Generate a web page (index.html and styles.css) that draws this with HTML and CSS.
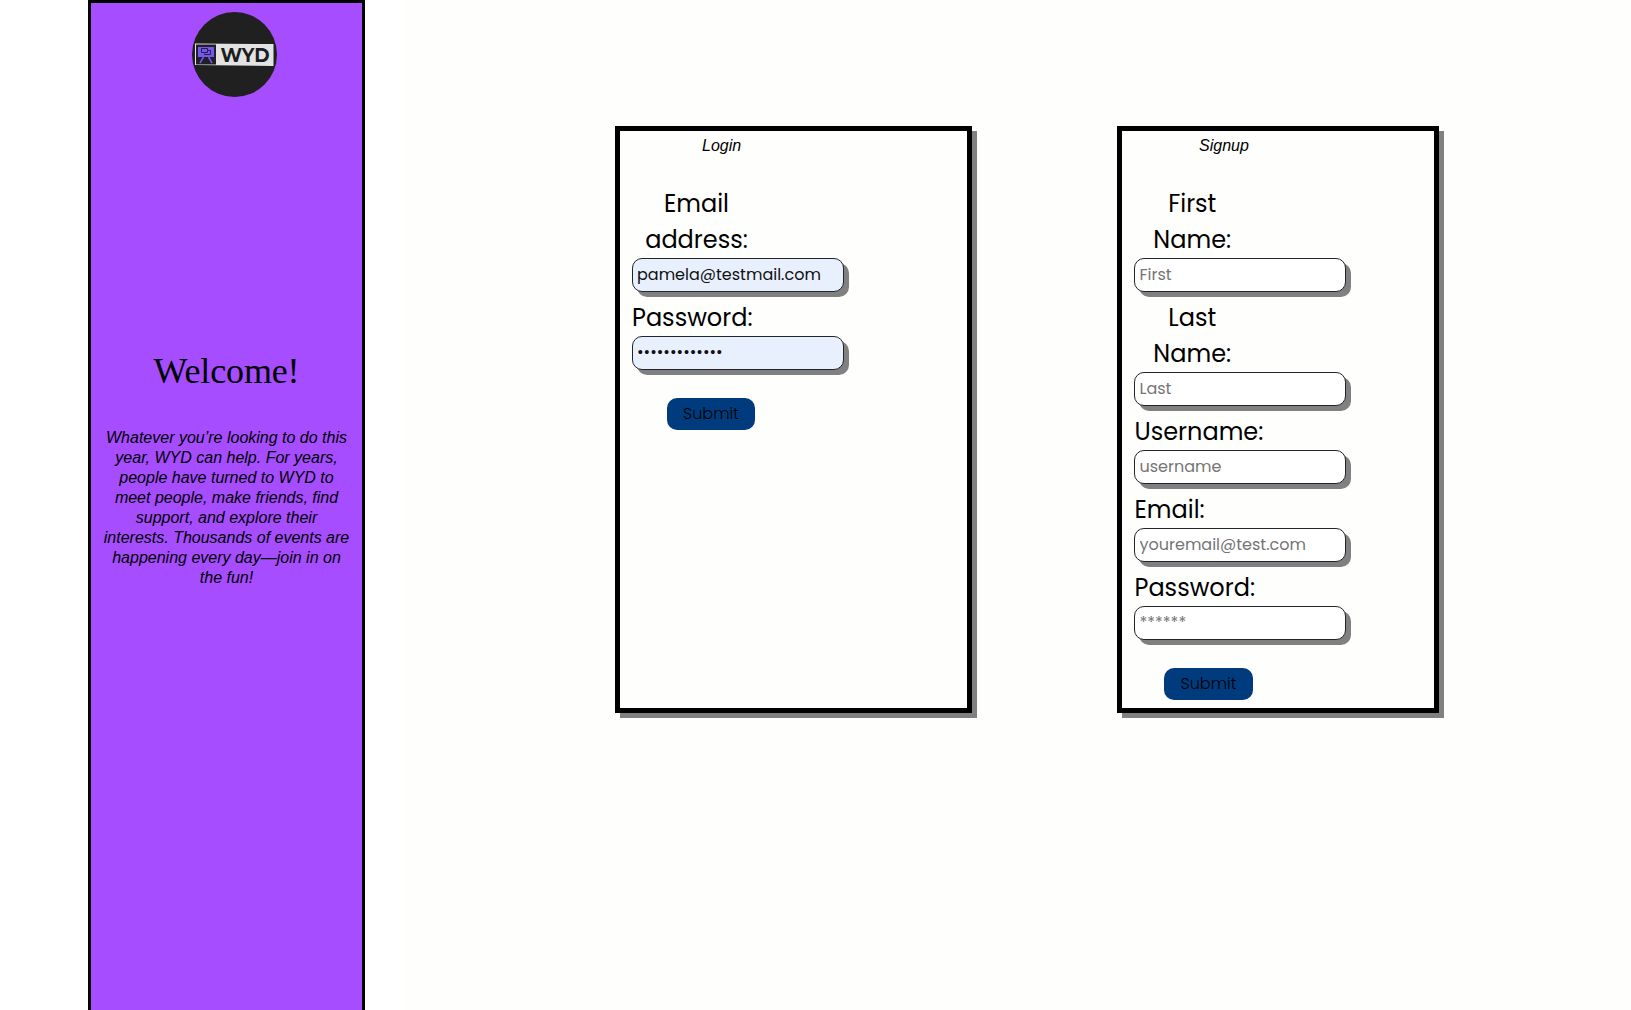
FILE: index.html
```html
<!DOCTYPE html>
<html lang="en">
<head>
<meta charset="utf-8">
<title>WYD</title>
<link rel="stylesheet" href="styles.css">
</head>
<body>
<div class="page">
  <aside class="sidebar">
    <svg class="logo" width="85" height="85" viewBox="0 0 85 85">
      <circle cx="42.5" cy="42.5" r="42.5" fill="#202020"/>
      <path d="M3 31.500 81.500 32V54L3 53Z" fill="#e3e3e3"/>
      <path d="M4 32.500H24V52.500H4Z" fill="#201f26"/>
      <path d="M6 35H22V45H6Z" fill="#7658f0"/>
      <path d="M9.500 36.500h6v4h-6zM12.500 41.500v1h6v-4h-3" fill="none" stroke="#25203f"/>
      <path d="M11.500 45 8 51M16.500 45 20 51" fill="none" stroke="#7658f0" stroke-width="1.500"/>
      <text class="logo-text" x="28.500" y="49.500" textLength="49" lengthAdjust="spacingAndGlyphs">WYD</text>
    </svg>
    <h1 class="welcome">Welcome!</h1>
    <p class="intro">Whatever you’re looking to do this<br>year, WYD can help. For years,<br>people have turned to WYD to<br>meet people, make friends, find<br>support, and explore their<br>interests. Thousands of events are<br>happening every day—join in on<br>the fun!</p>
  </aside>
  <main class="main">
    <section class="card login">
      <h2 class="title">Login</h2>
      <form class="form">
        <label class="label double">Email<br>address:</label>
        <input class="input filled" type="text" value="pamela@testmail.com">
        <label class="label">Password:</label>
        <input class="input filled dots" type="password" value="1234567890abc">
        <button class="submit" type="button">Submit</button>
      </form>
    </section>
    <section class="card signup">
      <h2 class="title">Signup</h2>
      <form class="form">
        <label class="label double">First<br>Name:</label>
        <input class="input" type="text" placeholder="First">
        <label class="label double">Last<br>Name:</label>
        <input class="input" type="text" placeholder="Last">
        <label class="label">Username:</label>
        <input class="input" type="text" placeholder="username">
        <label class="label">Email:</label>
        <input class="input" type="text" placeholder="youremail@test.com">
        <label class="label">Password:</label>
        <input class="input" type="text" placeholder="******">
        <button class="submit" type="button">Submit</button>
      </form>
    </section>
  </main>
</div>
</body>
</html>
```
FILE: styles.css
```css
* { box-sizing: border-box; }
body {
  margin: 0;
  background: #fff;
  color: #000;
  overflow: hidden;
}
.page {
  display: flex;
  height: 1010px;
  padding-left: 88px;
}
.sidebar {
  display: flex;
  flex-direction: column;
  align-items: center;
  flex: none;
  width: 277px;
  height: 1014px;
  padding-top: 9px;
  border: 3px solid #000;
  background: #a64dff;
}
.logo { display: block; flex: none; margin-left: 16px; }
.logo-text { font: 700 19px Montserrat, Inter, sans-serif; fill: #1d1d1d; }
.welcome {
  margin: 252px 0 0;
  font: 36px/44px "Liberation Serif", serif;
  letter-spacing: -0.15px;
}
.intro {
  margin: 35px 0 0;
  font: italic 16px/20px "Liberation Sans", sans-serif;
  text-align: center;
  white-space: nowrap;
}
.main {
  display: flex;
  align-items: flex-start;
  gap: 145px;
  flex: 1;
  margin-left: 38px;
  padding: 126px 0 0 212px;
  background: #fefefc;
}
.card {
  flex: none;
  height: 587px;
  padding: 5px 12px 0;
  border: 5px solid #000;
  box-shadow: 5px 5px 0 #808080;
}
.login { width: 357px; }
.signup { width: 322px; }
.title {
  margin: 0;
  padding-left: 70px;
  font: italic 16px/20px "Liberation Sans", sans-serif;
}
.signup .title { padding-left: 65px; }
.form {
  display: flex;
  flex-direction: column;
  align-items: flex-start;
  margin-top: 30px;
  font: 400 24px/36px Poppins, Inter, sans-serif;
}
.label { white-space: nowrap; }
.double { width: 129px; text-align: center; }
.signup .double { width: 116px; }
.input {
  width: 212px;
  height: 34px;
  margin: 0 0 8px;
  padding: 0 4px 2px;
  border: 1px solid #212529;
  border-radius: 10px;
  background: #fff;
  box-shadow: 5px 5px 0 #808080;
  color: #111;
  font: 400 16px/24px Poppins, Inter, sans-serif;
  outline: 0;
}
.input::placeholder { color: #757575; opacity: 1; }
.filled { background: #e8f0fe; }
.dots { padding-bottom: 4px; }
.signup .label { padding-left: 0.5px; }
.signup .input { padding-left: 4.5px; }
.submit {
  width: 88px;
  height: 32px;
  margin: 20px 0 0 35px;
  padding: 0;
  border: 0;
  border-radius: 10px;
  background: #003c7d;
  color: #000;
  font: 300 16px/24px Poppins, Inter, sans-serif;
}
.signup .submit { width: 89px; margin-left: 30px; }
```
